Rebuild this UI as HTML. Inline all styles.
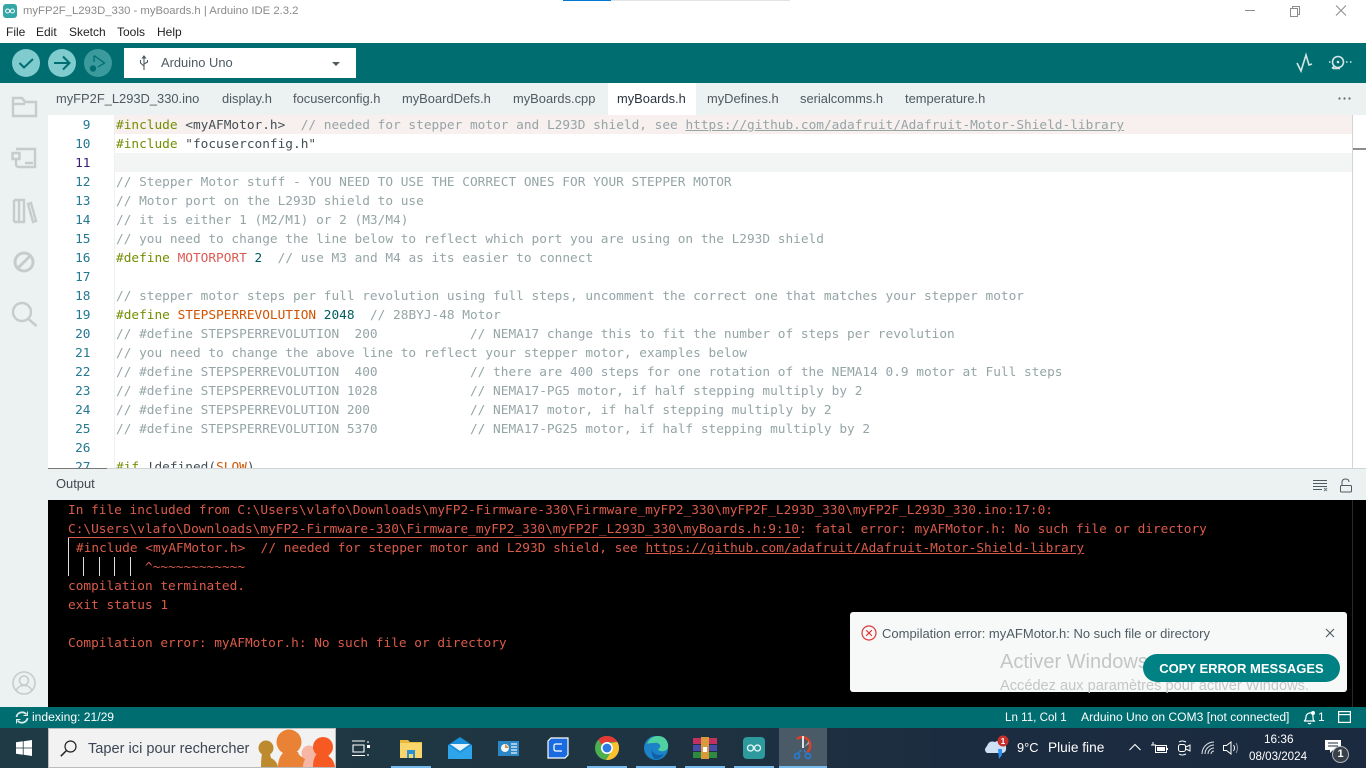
<!DOCTYPE html>
<html><head><meta charset="utf-8"><style>
*{box-sizing:border-box}
html,body{margin:0;padding:0;width:1366px;height:768px;overflow:hidden;background:#fff;font-family:"Liberation Sans",sans-serif}
.a{position:absolute}
.t{position:absolute;white-space:pre}
.ln{position:absolute;left:116px;height:21px;font:12.79px/21px "DejaVu Sans Mono",monospace;white-space:pre;color:#95a5a6}
.n{position:absolute;left:48px;width:42.5px;text-align:right;height:21px;font:12.79px/21px "DejaVu Sans Mono",monospace;color:#237893}
.k{color:#728e00}.o{color:#d35400}.p{color:#dd5a55}.d{color:#434f54}.s{color:#005c5f}.u{text-decoration:underline}
.out{position:absolute;left:68px;height:21px;font:12.79px/21px "DejaVu Sans Mono",monospace;white-space:pre;color:#da5b4a}
.tab{position:absolute;top:83px;height:32px;line-height:32px;font-size:12.9px;color:#4e5b61;white-space:pre}
.sb{position:absolute;top:707px;height:21px;line-height:21px;font-size:12px;color:#fff;white-space:pre}
svg{position:absolute;overflow:visible}
</style></head><body>
<!-- top -->
<div class="a" style="left:563px;top:0;width:48px;height:1px;background:#0078d7"></div>
<div class="a" style="left:611px;top:0;width:179px;height:1px;background:#e3e3e3"></div>
<svg style="left:3px;top:4px" width="14" height="14" viewBox="0 0 14 14"><rect width="14" height="14" rx="3" fill="#34a6a6"/><circle cx="4.6" cy="7" r="2" fill="none" stroke="#fff" stroke-width="1"/><circle cx="9.4" cy="7" r="2" fill="none" stroke="#fff" stroke-width="1"/></svg>
<div class="t" style="left:23px;top:4px;line-height:15px;font-size:11.3px;color:#8a8a8a">myFP2F_L293D_330 - myBoards.h | Arduino IDE 2.3.2</div>
<div class="t" style="left:6px;top:25px;line-height:15px;font-size:12px;color:#1f1f1f">File</div>
<div class="t" style="left:36px;top:25px;line-height:15px;font-size:12px;color:#1f1f1f">Edit</div>
<div class="t" style="left:69px;top:25px;line-height:15px;font-size:12px;color:#1f1f1f">Sketch</div>
<div class="t" style="left:117px;top:25px;line-height:15px;font-size:12px;color:#1f1f1f">Tools</div>
<div class="t" style="left:157px;top:25px;line-height:15px;font-size:12px;color:#1f1f1f">Help</div>
<svg style="left:1245px;top:4px" width="110" height="14" viewBox="0 0 110 14" fill="none" stroke="#8c8c8c" stroke-width="1"><path d="M0 6.500H10"/><path d="M45.500 4.500h7v8h-7zM47.500 4.500v-2h7v8h-2"/><path d="M91 1.500L101 11.500M101 1.500L91 11.500"/></svg>
<!-- toolbar -->
<div class="a" style="left:0;top:43px;width:1366px;height:40px;background:#006d70"></div>
<svg style="left:12px;top:49px" width="100" height="28" viewBox="0 0 100 28" fill="none"><circle cx="14" cy="14" r="14" fill="#7fcbcd"/><path d="M7.500 14l4.500 4.500 9-8.500" stroke="#006d70" stroke-width="2"/><circle cx="50" cy="14" r="14" fill="#7fcbcd"/><path d="M42 14h15M51 7.500l6.500 6.500-6.500 6.500" stroke="#006d70" stroke-width="2"/><circle cx="86" cy="14" r="14" fill="#3b9a9c"/><path d="M82 7v6M82 6.500l10.500 7.500-6.500 4" stroke="#006d70" stroke-width="1.300"/><circle cx="81" cy="19.500" r="3.200" fill="#006d70"/></svg>
<div class="a" style="left:124px;top:48px;width:232px;height:30px;background:#fff"></div>
<svg style="left:139px;top:56px" width="10" height="15" viewBox="0 0 10 15" fill="none" stroke="#4e5b61" stroke-width="1.100"><path d="M5 1v13M1.500 4v3l3.500 3M8.500 4v2l-3.500 2"/><path d="M5 0l-1.500 2h3z" fill="#4e5b61"/></svg>
<div class="t" style="left:161px;top:55px;line-height:16px;font-size:12.9px;color:#4e5b61">Arduino Uno</div>
<div class="a" style="left:332px;top:62px;width:0;height:0;border-left:4px solid transparent;border-right:4px solid transparent;border-top:4px solid #4e5b61"></div>
<svg style="left:1295px;top:53px" width="60" height="20" viewBox="0 0 60 20" fill="none" stroke="#d5e6e6" stroke-width="1.600"><path d="M2 10l4 8L11 2l3 10 3-1"/><circle cx="43" cy="9" r="5.500"/><circle cx="43" cy="9" r="1.300" fill="#d5e6e6" stroke="none"/><path d="M34 9h1.500M51 9h1.500M55 9h1.500M37 15.500l2-2M38 15.500h7"/></svg>
<!-- sidebar -->
<div class="a" style="left:0;top:83px;width:48px;height:624px;background:#ecf1f1"></div>
<div class="a" style="left:48px;top:83px;width:1318px;height:32px;background:#ecf1f1"></div>
<svg style="left:11px;top:96px" width="27" height="230" viewBox="0 0 27 230" fill="none" stroke="#c6cbcb" stroke-width="2.400"><path d="M2 20V2h9l3 4h11v14z"/><path d="M2 8h12"/>
<path d="M5 53H24V71H8q-3 0-3-3v-5M1.500 57h7v6h-7zM14 67h8"/><path d="M3 104v22M8 104v22M13 104v22M3 104h10v22H3M17 108l3-1 5 18-3 1z"/>
<circle cx="13" cy="166" r="9" stroke-width="3"/><path d="M7 172L19 160" stroke-width="3"/>
<circle cx="11" cy="216" r="9"/><path d="M17.500 223l8 7" stroke-width="2.500"/></svg>
<svg style="left:12px;top:671px" width="24" height="24" viewBox="0 0 24 24" fill="none" stroke="#c6cbcb" stroke-width="1.600"><circle cx="12" cy="12" r="11"/><circle cx="12" cy="9.500" r="4.500"/><path d="M4.500 19q2-4.500 7.500-4.500t7.500 4.500"/></svg>
<!-- tabs -->
<div class="a" style="left:608px;top:83px;width:88px;height:32px;background:#fff"></div>
<div class="tab" style="left:56px">myFP2F_L293D_330.ino</div>
<div class="tab" style="left:222px">display.h</div>
<div class="tab" style="left:293px">focuserconfig.h</div>
<div class="tab" style="left:402px">myBoardDefs.h</div>
<div class="tab" style="left:513px">myBoards.cpp</div>
<div class="tab" style="left:617px;color:#2c3440">myBoards.h</div>
<div class="tab" style="left:707px">myDefines.h</div>
<div class="tab" style="left:800px">serialcomms.h</div>
<div class="tab" style="left:905px">temperature.h</div>
<svg style="left:1338px;top:97px" width="14" height="3" viewBox="0 0 14 3" fill="#5a6a70"><circle cx="1.500" cy="1.500" r="1.100"/><circle cx="6.500" cy="1.500" r="1.100"/><circle cx="11.500" cy="1.500" r="1.100"/></svg>
<!-- editor -->
<div class="a" style="left:48px;top:115px;width:1318px;height:354px;background:#fff;overflow:hidden">
<div class="a" style="left:67px;top:0;width:1237px;height:19px;background:#f8efef"></div>
<div class="a" style="left:67px;top:38px;width:1237px;height:19px;background:#f3f5f4"></div>
<div class="a" style="left:66px;top:0;width:1px;height:354px;background:#f0f0f0"></div>
<div class="a" style="left:1304px;top:0;width:1px;height:354px;background:#d4d4d4"></div>
<div class="a" style="left:1305px;top:33px;width:13px;height:2px;background:#8c8c8c"></div>
</div>
<div class="n" style="top:115px">9</div><div class="ln" style="top:115px"><span class="k">#include</span> <span class="d">&lt;myAFMotor.h&gt;</span>  // needed for stepper motor and L293D shield, see <span class="u">https://github.com/adafruit/Adafruit-Motor-Shield-library</span></div>
<div class="n" style="top:134px">10</div><div class="ln" style="top:134px"><span class="k">#include</span> <span class="d">"focuserconfig.h"</span></div>
<div class="n" style="top:153px;color:#3b1a78">11</div>
<div class="n" style="top:172px">12</div><div class="ln" style="top:172px">// Stepper Motor stuff - YOU NEED TO USE THE CORRECT ONES FOR YOUR STEPPER MOTOR</div>
<div class="n" style="top:191px">13</div><div class="ln" style="top:191px">// Motor port on the L293D shield to use</div>
<div class="n" style="top:210px">14</div><div class="ln" style="top:210px">// it is either 1 (M2/M1) or 2 (M3/M4)</div>
<div class="n" style="top:229px">15</div><div class="ln" style="top:229px">// you need to change the line below to reflect which port you are using on the L293D shield</div>
<div class="n" style="top:248px">16</div><div class="ln" style="top:248px"><span class="k">#define</span> <span class="p">MOTORPORT</span> <span class="s">2</span>  // use M3 and M4 as its easier to connect</div>
<div class="n" style="top:267px">17</div>
<div class="n" style="top:286px">18</div><div class="ln" style="top:286px">// stepper motor steps per full revolution using full steps, uncomment the correct one that matches your stepper motor</div>
<div class="n" style="top:305px">19</div><div class="ln" style="top:305px"><span class="k">#define</span> <span class="o">STEPSPERREVOLUTION</span> <span class="s">2048</span>  // 28BYJ-48 Motor</div>
<div class="n" style="top:324px">20</div><div class="ln" style="top:324px">// #define STEPSPERREVOLUTION  200            // NEMA17 change this to fit the number of steps per revolution</div>
<div class="n" style="top:343px">21</div><div class="ln" style="top:343px">// you need to change the above line to reflect your stepper motor, examples below</div>
<div class="n" style="top:362px">22</div><div class="ln" style="top:362px">// #define STEPSPERREVOLUTION  400            // there are 400 steps for one rotation of the NEMA14 0.9 motor at Full steps</div>
<div class="n" style="top:381px">23</div><div class="ln" style="top:381px">// #define STEPSPERREVOLUTION 1028            // NEMA17-PG5 motor, if half stepping multiply by 2</div>
<div class="n" style="top:400px">24</div><div class="ln" style="top:400px">// #define STEPSPERREVOLUTION 200             // NEMA17 motor, if half stepping multiply by 2</div>
<div class="n" style="top:419px">25</div><div class="ln" style="top:419px">// #define STEPSPERREVOLUTION 5370            // NEMA17-PG25 motor, if half stepping multiply by 2</div>
<div class="n" style="top:438px">26</div>
<div class="n" style="top:457px">27</div><div class="ln" style="top:457px"><span class="k">#if</span> <span class="d">!defined(</span><span class="o">SLOW</span><span class="d">)</span></div>
<!-- output header -->
<div class="a" style="left:48px;top:468px;width:1318px;height:32px;background:#ecf1f1;border-top:1px solid #d0d4d4"></div>
<div class="a" style="left:48px;top:468px;width:59px;height:1px;background:#777"></div>
<div class="t" style="left:56px;top:476px;line-height:16px;font-size:12.900px;color:#3f4a50">Output</div>
<svg style="left:1313px;top:478px" width="42" height="15" viewBox="0 0 42 15" fill="none" stroke="#4e5b61" stroke-width="1"><path d="M0 2.500h14M0 5.500h14M0 8.500h14M0 11.500h9"/><path d="M11 10l3 3M14 10l-3 3" stroke="#6e7e84"/><rect x="27.500" y="7.500" width="11" height="6.500" rx="1"/><path d="M29 7.500V4.500q0-3.500 3.500-3.500t3.500 3"/></svg>
<!-- output -->
<div class="a" style="left:48px;top:500px;width:1318px;height:207px;background:#000"></div>
<div class="a" style="left:1352px;top:500px;width:1px;height:207px;background:#2a2a2a"></div>
<div class="out" style="top:500px">In file included from C:\Users\vlafo\Downloads\myFP2-Firmware-330\Firmware_myFP2_330\myFP2F_L293D_330\myFP2F_L293D_330.ino:17:0:</div>
<div class="out" style="top:519px">C:\Users\vlafo\Downloads\myFP2-Firmware-330\Firmware_myFP2_330\myFP2F_L293D_330\myBoards.h:9:10: fatal error: myAFMotor.h: No such file or directory</div>
<div class="a" style="left:68px;top:537px;width:732px;height:1px;background:#da5b4a"></div>
<div class="out" style="top:538px;left:76px">#include &lt;myAFMotor.h&gt;  // needed for stepper motor and L293D shield, see <span class="u">https://github.com/adafruit/Adafruit-Motor-Shield-library</span></div>
<div class="a" style="left:68px;top:538px;width:1px;height:38px;background:#e0e0e0"></div>
<div class="a" style="left:83px;top:557px;width:1px;height:19px;background:#e0e0e0"></div>
<div class="a" style="left:99px;top:557px;width:1px;height:19px;background:#e0e0e0"></div>
<div class="a" style="left:114px;top:557px;width:1px;height:19px;background:#e0e0e0"></div>
<div class="a" style="left:130px;top:557px;width:1px;height:19px;background:#e0e0e0"></div>
<div class="out" style="top:557px;left:145px">^~~~~~~~~~~~~</div>
<div class="out" style="top:576px">compilation terminated.</div>
<div class="out" style="top:595px">exit status 1</div>
<div class="out" style="top:633px">Compilation error: myAFMotor.h: No such file or directory</div>
<!-- notification -->
<div class="a" style="left:850px;top:612px;width:497px;height:80px;background:#f7f9f9;border-radius:3px"></div>
<svg style="left:861px;top:625px" width="16" height="16" viewBox="0 0 16 16" fill="none" stroke="#da3b3b" stroke-width="1.200"><circle cx="8" cy="8" r="7"/><path d="M5.200 5.200l5.600 5.600M10.800 5.200l-5.600 5.600"/></svg>
<div class="t" style="left:882px;top:626px;line-height:15px;font-size:13px;color:#4e5b61">Compilation error: myAFMotor.h: No such file or directory</div>
<svg style="left:1325px;top:628px" width="10" height="10" viewBox="0 0 10 10" fill="none" stroke="#4e5b61" stroke-width="1.100"><path d="M1 1l8 8M9 1L1 9"/></svg>
<div class="t" style="left:1000px;top:650px;line-height:24px;font-size:20px;color:#c4c6c6">Activer Windows</div>
<div class="t" style="left:1000px;top:678px;line-height:16px;font-size:14.600px;color:#c4c6c6">Accédez aux paramètres pour activer Windows.</div>
<div class="a" style="left:1143px;top:654px;width:197px;height:28px;border-radius:14px;background:#008184;color:#fff;font-size:13px;font-weight:bold;line-height:29px;text-align:center;white-space:pre">COPY ERROR MESSAGES</div>
<!-- status -->
<div class="a" style="left:0;top:707px;width:1366px;height:21px;background:#006d70"></div>
<svg style="left:15px;top:711px" width="14" height="13" viewBox="0 0 14 13" fill="none" stroke="#d8ecec" stroke-width="1.800"><path d="M1.500 6a5.500 5 0 0 1 10-2.500M12.500 7a5.500 5 0 0 1-10 2.500"/><path d="M12.500 0.500v4h-4M1.500 12.500v-4h4" stroke-width="1"/></svg>
<div class="sb" style="left:32px;font-size:12.100px">indexing: 21/29</div>
<div class="sb" style="left:1005px;font-size:11.600px">Ln 11, Col 1</div>
<div class="sb" style="left:1081px;font-size:12.100px">Arduino Uno on COM3 [not connected]</div>
<svg style="left:1303px;top:710px" width="13" height="15" viewBox="0 0 13 15" fill="none" stroke="#fff" stroke-width="1.200"><path d="M1 11q2-1 2-4t3.500-4 3.500 4 2 4zM5 13q1.500 1.500 3 0"/><circle cx="10" cy="3" r="2" fill="#fff" stroke="none"/></svg>
<div class="sb" style="left:1318px">1</div>
<svg style="left:1338px;top:711px" width="13" height="12" viewBox="0 0 13 12" fill="none" stroke="#fff" stroke-width="1.200"><rect x="0.600" y="0.600" width="11.800" height="10.800"/><path d="M0.600 3.600h11.800"/></svg>
<!-- taskbar -->
<div class="a" style="left:0;top:728px;width:1366px;height:40px;background:linear-gradient(90deg,#1f3a45,#1f3642 40%,#1c2c40 70%,#1b2a3e)"></div>
<svg style="left:16px;top:740px" width="16" height="16" viewBox="0 0 16 16" fill="#fff"><path d="M0 2.300L6.800 1.300V7.600H0zM7.600 1.200L16 0V7.600H7.600zM0 8.400H6.800V14.700L0 13.700zM7.600 8.400H16V16L7.600 14.800z"/></svg>
<div class="a" style="left:48px;top:728px;width:288px;height:40px;background:#f2f2f2;border:1px solid #b9bcbe"></div>
<svg style="left:60px;top:740px" width="17" height="17" viewBox="0 0 17 17" fill="none" stroke="#222" stroke-width="1.200"><circle cx="10.500" cy="6.500" r="5.500"/><path d="M6.500 10.500L0.800 16.200" stroke-width="1.500"/></svg>
<div class="t" style="left:88px;top:740px;line-height:18px;font-size:14.600px;color:#3c4654">Taper ici pour rechercher</div>
<svg style="left:256px;top:729px" width="80" height="38" viewBox="0 0 80 38">
<circle cx="10" cy="19" r="7.500" fill="#bd8a2f"/><path d="M5 38q0-8 1-13h8l1 4q6 3 7 9z" fill="#bd8a2f"/>
<circle cx="33" cy="13" r="12.500" fill="#ea8235"/><path d="M22 38q0-10 6-15h14q1 5 8 6 5 3 6 9z" fill="#ea8235"/>
<circle cx="53" cy="24" r="7.500" fill="#f6b6a3"/><path d="M47 38q0-6 3-8h8v8z" fill="#f6b6a3"/>
<circle cx="67" cy="18" r="10" fill="#f65a22"/><path d="M57 38q0-8 3-12h12q1 2 3 3 3 3 4 9z" fill="#f65a22"/></svg>
<svg style="left:352px;top:740px" width="18" height="17" viewBox="0 0 18 17" fill="none" stroke="#fff" stroke-width="1.100"><path d="M0 1h13M0 15.500h13M1 5h11v7H1zM16 1v2M16 14v2"/><rect x="15" y="5" width="3" height="3" fill="#fff" stroke="none"/></svg>
<svg style="left:400px;top:739px" width="22" height="20" viewBox="0 0 22 20"><path d="M0 1h8l2 2h12v16H0z" fill="#e8b93a"/><path d="M0 4h22v15H0z" fill="#f9d66b"/><path d="M7 11h8v8h-2v-4H9v4H7z" fill="#2a90d6"/></svg>
<svg style="left:448px;top:737px" width="24" height="22" viewBox="0 0 24 22"><path d="M0 8L12 0l12 8v14H0z" fill="#1a8fdc"/><path d="M2 7h20L12 14z" fill="#e8f4fc"/><path d="M0 8l12 8 12-8v14H0z" fill="#2ea4ea"/></svg>
<svg style="left:498px;top:741px" width="21" height="15" viewBox="0 0 21 15"><rect width="21" height="15" fill="#2d86c6"/><circle cx="7" cy="7" r="4" fill="#f2f8fc"/><path d="M7 3v4h4" fill="#e88a2a"/><path d="M13 3h6M13 6h6M13 9h6M13 12h6" stroke="#eaf4fb" stroke-width="1.200"/></svg>
<svg style="left:547px;top:737px" width="22" height="22" viewBox="0 0 22 22"><path d="M1 4l3-3h17v17l-3 3H1z" fill="#1a6be0" stroke="#fff" stroke-width="1.200"/><path d="M15 7H9q-2 0-2 2v3q0 2 2 2h6" fill="none" stroke="#fff" stroke-width="1.300"/></svg>
<svg style="left:595px;top:736px" width="24" height="24" viewBox="0 0 24 24"><circle cx="12" cy="12" r="12" fill="#4caf50"/><path d="M12 0a12 12 0 0 1 10.400 6H12a6 6 0 0 0-5.200 3L3.300 3.600A12 12 0 0 1 12 0z" fill="#e53935"/><path d="M22.400 6A12 12 0 0 1 11 24l5.500-9A6 6 0 0 0 16 7z" fill="#fbc02d"/><circle cx="12" cy="12" r="6" fill="#fff"/><circle cx="12" cy="12" r="4.400" fill="#2a7ae2"/></svg>
<svg style="left:644px;top:736px" width="24" height="24" viewBox="0 0 24 24"><circle cx="12" cy="12" r="12" fill="#1c83c8"/><path d="M3 8q3-8 11-8 8 0 10 8 1 6-4 7-5 1-6-2 3-1 2-4-2-3-6-2-5 0-7 1z" fill="#4fd0a0"/><path d="M8 13q1 6 7 6 3 0 5-1-3 5-9 5-4-3-3-10z" fill="#0f5fa8"/></svg>
<svg style="left:693px;top:737px" width="24" height="22" viewBox="0 0 24 22"><rect y="1" width="24" height="6" fill="#c03060"/><rect y="8" width="24" height="6" fill="#4a4aa8"/><rect y="15" width="24" height="6" fill="#2e8a3e"/><rect x="8" y="0" width="8" height="22" fill="#d89a3a"/><rect x="10" y="10" width="4" height="5" fill="#fff"/></svg>
<svg style="left:743px;top:737px" width="22" height="22" viewBox="0 0 22 22"><rect width="22" height="22" rx="4" fill="#2d9a9e"/><circle cx="7.500" cy="11" r="3" fill="none" stroke="#e8f6f6" stroke-width="1.300"/><circle cx="14.500" cy="11" r="3" fill="none" stroke="#e8f6f6" stroke-width="1.300"/></svg>
<div class="a" style="left:779px;top:728px;width:48px;height:40px;background:#4a5a66"></div>
<svg style="left:793px;top:736px" width="20" height="24" viewBox="0 0 20 24" fill="none"><path d="M4 3a9 9 0 0 1 9-1q5 3 4 10-1 3-3 4" stroke="#d8402a" stroke-width="2.500"/><path d="M9 0h2v12H9z" fill="#dfe3e6"/><path d="M11 11l5-6v3z" fill="#a0a8ad"/><path d="M8 14l-3 4M11 14l3 4" stroke="#2a7ad0" stroke-width="1.500"/><circle cx="4" cy="20" r="2.500" stroke="#2a7ad0" stroke-width="1.800"/><circle cx="15" cy="20" r="2.500" stroke="#2a7ad0" stroke-width="1.800"/></svg>
<!-- underlines -->
<div class="a" style="left:391px;top:766px;width:40px;height:2px;background:#76b9ed"></div>
<div class="a" style="left:587px;top:766px;width:40px;height:2px;background:#76b9ed"></div>
<div class="a" style="left:636px;top:766px;width:40px;height:2px;background:#76b9ed"></div>
<div class="a" style="left:685px;top:766px;width:40px;height:2px;background:#76b9ed"></div>
<div class="a" style="left:734px;top:766px;width:40px;height:2px;background:#76b9ed"></div>
<div class="a" style="left:779px;top:766px;width:48px;height:2px;background:#76b9ed"></div>
<!-- tray -->
<svg style="left:984px;top:736px" width="26" height="24" viewBox="0 0 26 24"><path d="M3 17q-4-3 0-7 2-6 8-4 4-3 8 1 4 2 3 7-1 3-4 3z" fill="#cfe0f5"/><path d="M14 13h4v6l-3 4z" fill="#2a8ff0"/><circle cx="19" cy="5" r="5.500" fill="#c9302c"/><text x="19" y="8" font-size="8" font-weight="bold" fill="#fff" text-anchor="middle" font-family="Liberation Sans">1</text></svg>
<div class="t" style="left:1017px;top:739px;line-height:18px;font-size:12.800px;color:#fff">9°C</div>
<div class="t" style="left:1048px;top:739px;line-height:18px;font-size:13.700px;color:#fff">Pluie fine</div>
<svg style="left:1129px;top:743px" width="12" height="8" viewBox="0 0 12 8" fill="none" stroke="#fff" stroke-width="1.100"><path d="M0.500 7L6 1.500 11.500 7"/></svg>
<svg style="left:1151px;top:742px" width="17" height="12" viewBox="0 0 17 12" fill="none" stroke="#fff"><rect x="4.500" y="3.500" width="11" height="7"/><rect x="6" y="5" width="8" height="4" fill="#fff" stroke="none"/><path d="M16.500 6v2M0 3h5M2 0v3"/></svg>
<svg style="left:1177px;top:740px" width="14" height="16" viewBox="0 0 14 16" fill="none" stroke="#fff"><rect x="1.500" y="4.500" width="7" height="7" rx="2"/><path d="M9 7l4-2v6l-4-2M2 2q3-2 7 0M2 14q3 2 7 0"/></svg>
<svg style="left:1201px;top:741px" width="14" height="14" viewBox="0 0 14 14" fill="none" stroke="#dfe6ea"><path d="M1 13A12 12 0 0 1 13 1M4 13A9 9 0 0 1 13 4M7 13a6 6 0 0 1 6-6M10 13a3 3 0 0 1 3-3"/></svg>
<svg style="left:1223px;top:741px" width="17" height="14" viewBox="0 0 17 14" fill="none" stroke="#fff"><path d="M0.500 4.500h3L8 1v12L3.500 9.500h-3z"/><path d="M10.500 4q2 3 0 6"/><path d="M13 2q3 5 0 10" stroke="#8b97a0"/></svg>
<div class="t" style="left:1264px;top:732px;line-height:15px;font-size:11.800px;color:#fff">16:36</div>
<div class="t" style="left:1249px;top:749px;line-height:15px;font-size:11.600px;color:#fff">08/03/2024</div>
<svg style="left:1325px;top:740px" width="17" height="13" viewBox="0 0 17 13"><path d="M0 0h16v10H8l-3 3v-3H0z" fill="#fff"/><path d="M3 3h10M3 6h10" stroke="#1c2c40"/></svg>
<div class="a" style="left:1332px;top:746px;width:17px;height:17px;border-radius:50%;background:#3a4048;border:1px solid #aeb4b8;color:#fff;font-size:11px;font-weight:bold;line-height:15px;text-align:center">1</div>
</body></html>
